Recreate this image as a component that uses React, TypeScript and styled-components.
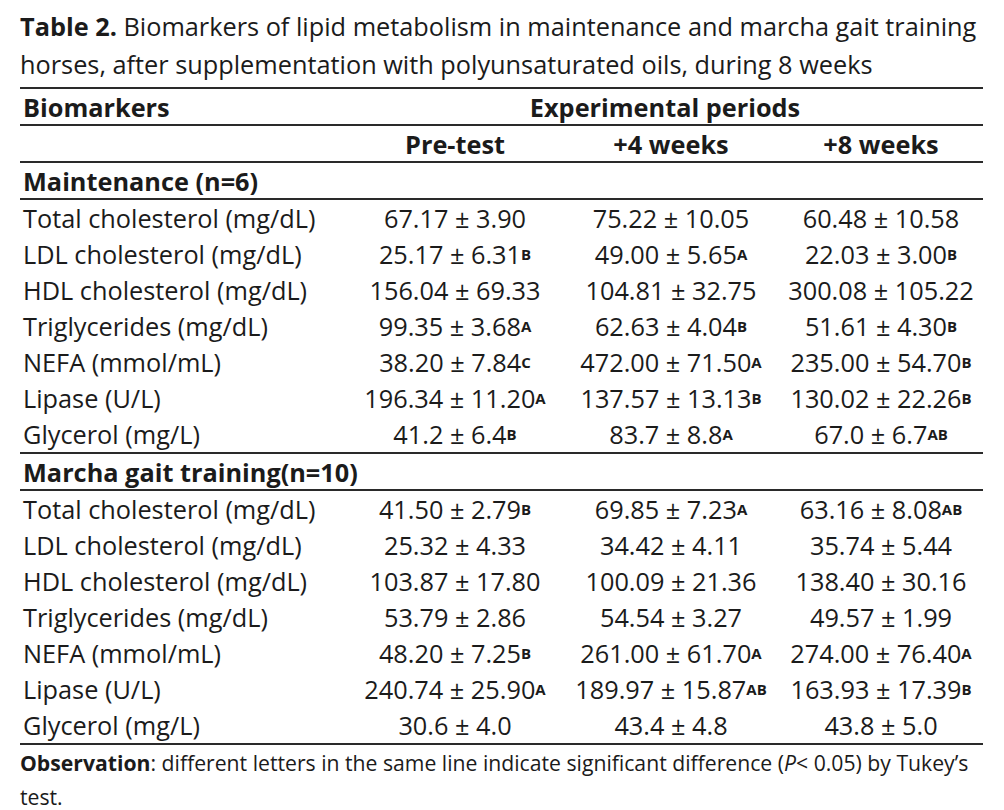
import styled, { createGlobalStyle } from "styled-components"

const GlobalStyle = createGlobalStyle`
  body {
    margin: 0;
    background: #ffffff;
    color: #1b1b1b;
    font-family: "Open Sans", "Noto Sans", sans-serif;
  }
`

type Cell = { value: string; mark?: string }

type Row = { label: string; cells: Cell[] }

const maintenance: Row[] = [
  {
    label: "Total cholesterol (mg/dL)",
    cells: [{ value: "67.17 ± 3.90" }, { value: "75.22 ± 10.05" }, { value: "60.48 ± 10.58" }]
  },
  {
    label: "LDL cholesterol (mg/dL)",
    cells: [
      { value: "25.17 ± 6.31", mark: "B" },
      { value: "49.00 ± 5.65", mark: "A" },
      { value: "22.03 ± 3.00", mark: "B" }
    ]
  },
  {
    label: "HDL cholesterol (mg/dL)",
    cells: [{ value: "156.04 ± 69.33" }, { value: "104.81 ± 32.75" }, { value: "300.08 ± 105.22" }]
  },
  {
    label: "Triglycerides (mg/dL)",
    cells: [
      { value: "99.35 ± 3.68", mark: "A" },
      { value: "62.63 ± 4.04", mark: "B" },
      { value: "51.61 ± 4.30", mark: "B" }
    ]
  },
  {
    label: "NEFA (mmol/mL)",
    cells: [
      { value: "38.20 ± 7.84", mark: "C" },
      { value: "472.00 ± 71.50", mark: "A" },
      { value: "235.00 ± 54.70", mark: "B" }
    ]
  },
  {
    label: "Lipase (U/L)",
    cells: [
      { value: "196.34 ± 11.20", mark: "A" },
      { value: "137.57 ± 13.13", mark: "B" },
      { value: "130.02 ± 22.26", mark: "B" }
    ]
  },
  {
    label: "Glycerol (mg/L)",
    cells: [
      { value: "41.2 ± 6.4", mark: "B" },
      { value: "83.7 ± 8.8", mark: "A" },
      { value: "67.0 ± 6.7", mark: "AB" }
    ]
  }
]

const marcha: Row[] = [
  {
    label: "Total cholesterol (mg/dL)",
    cells: [
      { value: "41.50 ± 2.79", mark: "B" },
      { value: "69.85 ± 7.23", mark: "A" },
      { value: "63.16 ± 8.08", mark: "AB" }
    ]
  },
  {
    label: "LDL cholesterol (mg/dL)",
    cells: [{ value: "25.32 ± 4.33" }, { value: "34.42 ± 4.11" }, { value: "35.74 ± 5.44" }]
  },
  {
    label: "HDL cholesterol (mg/dL)",
    cells: [{ value: "103.87 ± 17.80" }, { value: "100.09 ± 21.36" }, { value: "138.40 ± 30.16" }]
  },
  {
    label: "Triglycerides (mg/dL)",
    cells: [{ value: "53.79 ± 2.86" }, { value: "54.54 ± 3.27" }, { value: "49.57 ± 1.99" }]
  },
  {
    label: "NEFA (mmol/mL)",
    cells: [
      { value: "48.20 ± 7.25", mark: "B" },
      { value: "261.00 ± 61.70", mark: "A" },
      { value: "274.00 ± 76.40", mark: "A" }
    ]
  },
  {
    label: "Lipase (U/L)",
    cells: [
      { value: "240.74 ± 25.90", mark: "A" },
      { value: "189.97 ± 15.87", mark: "AB" },
      { value: "163.93 ± 17.39", mark: "B" }
    ]
  },
  {
    label: "Glycerol (mg/L)",
    cells: [{ value: "30.6 ± 4.0" }, { value: "43.4 ± 4.8" }, { value: "43.8 ± 5.0" }]
  }
]

const Page = styled.div`
  width: 963px;
  padding: 7px 0 0 20px;
`

const Caption = styled.p`
  margin: 0;
  width: 975px;
  font-size: 25.3px;
  line-height: 38px;
  color: #1b1b1b;

  b {
    font-weight: 700;
  }
`

const Table = styled.div`
  display: grid;
  grid-template-columns: 327px 216px 216px 204px;
  margin-top: 4px;
  border-top: 2px solid #2a2a2a;
`

const HeadCell = styled.div<{ $span?: number; $left?: boolean }>`
  grid-column: span ${(p) => p.$span ?? 1};
  height: 35px;
  display: flex;
  align-items: center;
  justify-content: ${(p) => (p.$left ? "flex-start" : "center")};
  padding-left: ${(p) => (p.$left ? "3px" : "0")};
  font-size: 25.3px;
  font-weight: 700;
  border-bottom: 2px solid #2a2a2a;
`

const GroupCell = styled(HeadCell)`
  grid-column: 1 / -1;
`

const LabelCell = styled.div<{ $last?: boolean }>`
  height: 36px;
  display: flex;
  align-items: center;
  padding-left: 3px;
  font-size: 25.3px;
  border-bottom: ${(p) => (p.$last ? "2px solid #2a2a2a" : "none")};
`

const ValueCell = styled(LabelCell)`
  justify-content: center;
  padding-left: 0;
  white-space: nowrap;
`

const Mark = styled.sup`
  font-size: 15px;
  font-weight: 700;
  line-height: 0;
  vertical-align: 8px;
`

const Note = styled.p`
  margin: 0;
  padding-top: 1px;
  font-size: 21.2px;
  line-height: 34px;
  width: 975px;

  b {
    font-weight: 700;
  }
`

function DataRows({ rows }: { rows: Row[] }) {
  return (
    <>
      {rows.map((row, i) => {
        const last = i === rows.length - 1
        return [
          <LabelCell key={row.label} $last={last}>
            {row.label}
          </LabelCell>,
          ...row.cells.map((c, j) => (
            <ValueCell key={row.label + j} $last={last}>
              {c.value}
              {c.mark && <Mark>{c.mark}</Mark>}
            </ValueCell>
          ))
        ]
      })}
    </>
  )
}

export default function App() {
  return (
    <Page>
      <GlobalStyle />
      <Caption>
        <b>Table 2.</b> Biomarkers of lipid metabolism in maintenance and marcha gait training horses, after
        supplementation with polyunsaturated oils, during 8 weeks
      </Caption>
      <Table>
        <HeadCell $left>Biomarkers</HeadCell>
        <HeadCell $span={3}>Experimental periods</HeadCell>
        <HeadCell />
        <HeadCell>Pre-test</HeadCell>
        <HeadCell>+4 weeks</HeadCell>
        <HeadCell>+8 weeks</HeadCell>
        <GroupCell $left>Maintenance (n=6)</GroupCell>
        <DataRows rows={maintenance} />
        <GroupCell $left>Marcha gait training(n=10)</GroupCell>
        <DataRows rows={marcha} />
      </Table>
      <Note>
        <b>Observation</b>: different letters in the same line indicate significant difference (<i>P</i>&lt; 0.05) by
        Tukey’s test.
      </Note>
    </Page>
  )
}
